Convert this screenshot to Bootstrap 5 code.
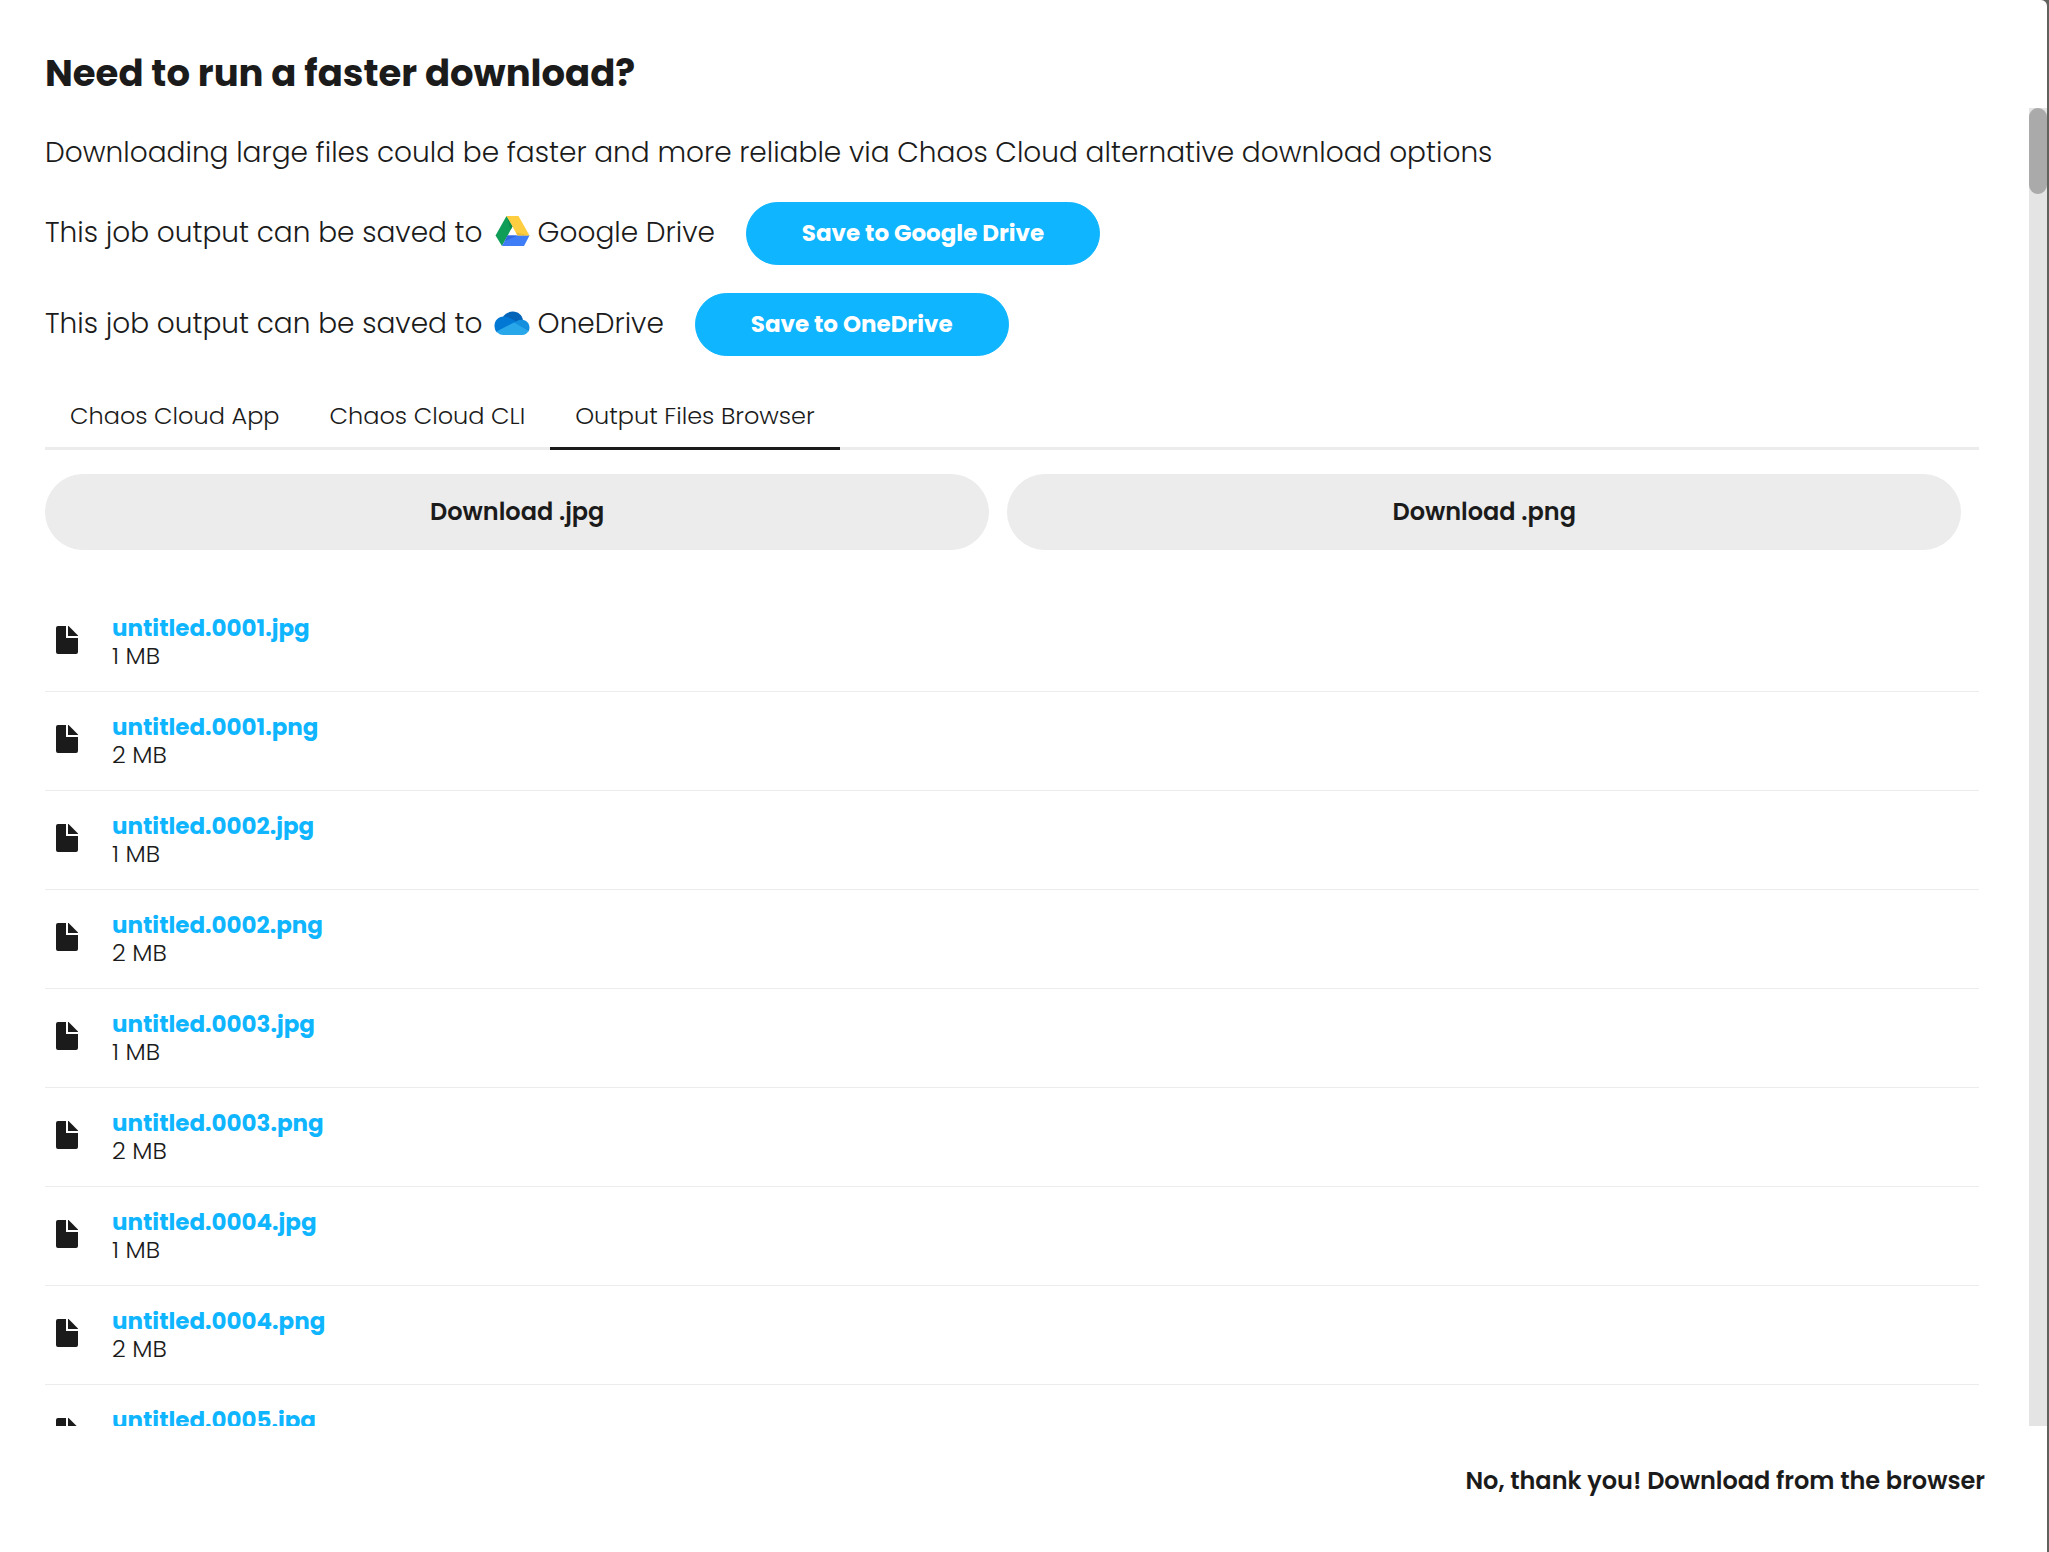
<!DOCTYPE html>
<html lang="en">
<head>
<meta charset="utf-8">
<meta name="viewport" content="width=device-width, initial-scale=1">
<title>Need to run a faster download?</title>
<link href="https://cdn.jsdelivr.net/npm/bootstrap@5.3.0/dist/css/bootstrap.min.css" rel="stylesheet">
<style>
  :root { --ink: #1b1b1b; --sky: #0fb5ff; --mist: #ececec; }
  body { font-family: Poppins, Inter, "Open Sans", sans-serif; color: var(--ink); background: #61615e; }
  .dialog-sheet { margin-right: 2px; background: #fff; border-top-right-radius: 6px; }
  .dialog-head { height: 108px; padding: 49px 45px 0; }
  .dialog-title { font-size: 37px; font-weight: 700; line-height: 48px; }
  .scroll-pane { min-height: 0; }
  .scroll-content { min-width: 0; padding: 27px 50px 0 45px; }
  .scroll-track { width: 18px; background: #e4e4e4; }
  .scroll-thumb { height: 86px; background: #aaa; }
  .intro-text { font-size: 28px; font-weight: 300; line-height: 36px; }
  .lead-line { margin-bottom: 31px; }
  .save-row { margin-bottom: 28px; }
  .service-label { padding-bottom: 2px; }
  .service-icon { width: 36px; height: 36px; margin: 0 8px 0 11px; flex: none; }
  .save-btn { --bs-btn-color: #fff; --bs-btn-bg: var(--sky); --bs-btn-border-color: var(--sky);
    --bs-btn-hover-color: #fff; --bs-btn-hover-bg: #009fe6; --bs-btn-hover-border-color: #009fe6;
    height: 63px; margin-left: 31px; padding: 0 55px; font-size: 23px; font-weight: 700; }
  .dialog-tabs { padding-top: 17px; border-bottom: 3px solid var(--mist); }
  .dialog-tabs .nav-link { margin-bottom: -3px; padding: 0 25px 16px; border-bottom: 3px solid transparent; border-radius: 0;
    color: var(--ink); font-size: 24px; font-weight: 300; line-height: 30px; }
  .dialog-tabs .nav-link.active { border-color: var(--ink); }
  .bulk-row { margin: 24px 0 43px; }
  .bulk-btn { --bs-btn-color: var(--ink); --bs-btn-bg: var(--mist); --bs-btn-border-color: var(--mist);
    --bs-btn-hover-bg: #dedede; --bs-btn-hover-border-color: #dedede;
    height: 76px; margin-right: 18px; font-size: 24px; font-weight: 600; }
  .file-row { height: 99px; padding-left: 11px; border-bottom: 1px solid var(--mist); }
  .file-icon { width: 22px; height: 28px; margin: 0 34px 5px 0; flex: none; }
  .file-link, .file-size { line-height: 27px; }
  .file-link { color: var(--sky); font-size: 23px; font-weight: 700; }
  .file-size { font-size: 24px; font-weight: 300; }
  .dialog-foot { height: 126px; padding: 0 62px 16px; }
  .dismiss-btn { color: var(--ink); font-size: 24px; font-weight: 600; }
</style>
</head>
<body>
<svg class="d-none" aria-hidden="true">
  <symbol id="file" viewBox="0 0 22 28">
    <path fill="#1b1b1b" d="M2 0H10V12H22V26Q22 28 20 28H2Q0 28 0 26V2Q0 0 2 0Z"/>
    <path fill="#1b1b1b" d="M12 0H12.600L22 9.400V10H12Z"/>
  </symbol>
</svg>
<main class="dialog-sheet vh-100 d-flex flex-column overflow-hidden">
  <header class="dialog-head flex-shrink-0">
    <h1 class="dialog-title mb-0">Need to run a faster download?</h1>
  </header>
  <div class="scroll-pane d-flex flex-fill overflow-hidden">
    <div class="scroll-content flex-fill">
      <p class="intro-text lead-line text-nowrap">Downloading large files could be faster and more reliable via Chaos Cloud alternative download options</p>
      <div>
        <div class="save-row d-flex align-items-center">
          <span class="intro-text service-label">This job output can be saved to</span>
          <svg class="service-icon" viewBox="0 0 36 36" aria-hidden="true">
            <path fill="#109d58" d="M12.500 0L18.500 10.500L8 30L1.500 19.500Z"/>
            <path fill="#ffcd40" d="M12.500 0H24.500L35.500 19.500H23.500Z"/>
            <path fill="#3f7df6" d="M13.500 19.500H35.500L30 30H8Z"/>
            <path fill="#0c8a4c" d="M13 1L18.500 10.500L16.500 14Z"/>
            <path fill="#eebd35" d="M23.500 19.500H35.500L22 16.500Z"/>
            <path fill="#3369dc" d="M13.500 19.500H23.500L11 25Z"/>
          </svg>
          <span class="intro-text service-label">Google Drive</span>
          <button type="button" class="save-btn btn rounded-pill">Save to Google Drive</button>
        </div>
        <div class="save-row d-flex align-items-center">
          <span class="intro-text service-label">This job output can be saved to</span>
          <svg class="service-icon" viewBox="0 0 36 36" aria-hidden="true">
            <path fill="#0364b8" d="M9 10C11 6.500 15 4.500 19 4.500C24 4.500 28 8 29 13L21 19L9 10Z"/>
            <path fill="#0078d4" d="M9.500 9.500C13 9.500 16 11 22 14.500L22 17L3 25.500C1 23.500 .500 21 .500 18.500C.500 13.500 4.500 9.500 9.500 9.500Z"/>
            <path fill="#1490df" d="M22 14.500C24 13 26 12.700 28 12.700C32.500 12.700 35.500 16.500 35.500 20.500C35.500 22 35 23.500 34.500 24.500L19 16.500Z"/>
            <path fill="#28a8ea" d="M20 15.500L34.500 24C33 26.500 31 28 28 28H9.500C6.500 28 4.500 27 2.500 24.500Z"/>
          </svg>
          <span class="intro-text service-label">OneDrive</span>
          <button type="button" class="save-btn btn rounded-pill">Save to OneDrive</button>
        </div>
      </div>
      <ul class="dialog-tabs nav">
        <li class="nav-item"><a class="nav-link" href="#app">Chaos Cloud App</a></li>
        <li class="nav-item"><a class="nav-link" href="#cli">Chaos Cloud CLI</a></li>
        <li class="nav-item"><a class="nav-link active" aria-current="page" href="#files">Output Files Browser</a></li>
      </ul>
      <div class="bulk-row d-flex">
        <button type="button" class="bulk-btn btn rounded-pill flex-grow-1">Download .jpg</button>
        <button type="button" class="bulk-btn btn rounded-pill flex-grow-1">Download .png</button>
      </div>
      <ul class="list-unstyled mb-0" id="files">
        <li class="file-row d-flex align-items-center"><svg class="file-icon" aria-hidden="true"><use href="#file"/></svg><div><a class="file-link d-block text-decoration-none" href="#f1j">untitled.0001.jpg</a><div class="file-size">1 MB</div></div></li>
        <li class="file-row d-flex align-items-center"><svg class="file-icon" aria-hidden="true"><use href="#file"/></svg><div><a class="file-link d-block text-decoration-none" href="#f1p">untitled.0001.png</a><div class="file-size">2 MB</div></div></li>
        <li class="file-row d-flex align-items-center"><svg class="file-icon" aria-hidden="true"><use href="#file"/></svg><div><a class="file-link d-block text-decoration-none" href="#f2j">untitled.0002.jpg</a><div class="file-size">1 MB</div></div></li>
        <li class="file-row d-flex align-items-center"><svg class="file-icon" aria-hidden="true"><use href="#file"/></svg><div><a class="file-link d-block text-decoration-none" href="#f2p">untitled.0002.png</a><div class="file-size">2 MB</div></div></li>
        <li class="file-row d-flex align-items-center"><svg class="file-icon" aria-hidden="true"><use href="#file"/></svg><div><a class="file-link d-block text-decoration-none" href="#f3j">untitled.0003.jpg</a><div class="file-size">1 MB</div></div></li>
        <li class="file-row d-flex align-items-center"><svg class="file-icon" aria-hidden="true"><use href="#file"/></svg><div><a class="file-link d-block text-decoration-none" href="#f3p">untitled.0003.png</a><div class="file-size">2 MB</div></div></li>
        <li class="file-row d-flex align-items-center"><svg class="file-icon" aria-hidden="true"><use href="#file"/></svg><div><a class="file-link d-block text-decoration-none" href="#f4j">untitled.0004.jpg</a><div class="file-size">1 MB</div></div></li>
        <li class="file-row d-flex align-items-center"><svg class="file-icon" aria-hidden="true"><use href="#file"/></svg><div><a class="file-link d-block text-decoration-none" href="#f4p">untitled.0004.png</a><div class="file-size">2 MB</div></div></li>
        <li class="file-row d-flex align-items-center"><svg class="file-icon" aria-hidden="true"><use href="#file"/></svg><div><a class="file-link d-block text-decoration-none" href="#f5j">untitled.0005.jpg</a><div class="file-size">1 MB</div></div></li>
      </ul>
    </div>
    <div class="scroll-track flex-shrink-0" aria-hidden="true"><div class="scroll-thumb rounded-pill"></div></div>
  </div>
  <footer class="dialog-foot d-flex align-items-center justify-content-end flex-shrink-0">
    <button type="button" class="dismiss-btn btn border-0 p-0">No, thank you! Download from the browser</button>
  </footer>
</main>
<script src="https://cdn.jsdelivr.net/npm/bootstrap@5.3.0/dist/js/bootstrap.bundle.min.js"></script>
</body>
</html>
